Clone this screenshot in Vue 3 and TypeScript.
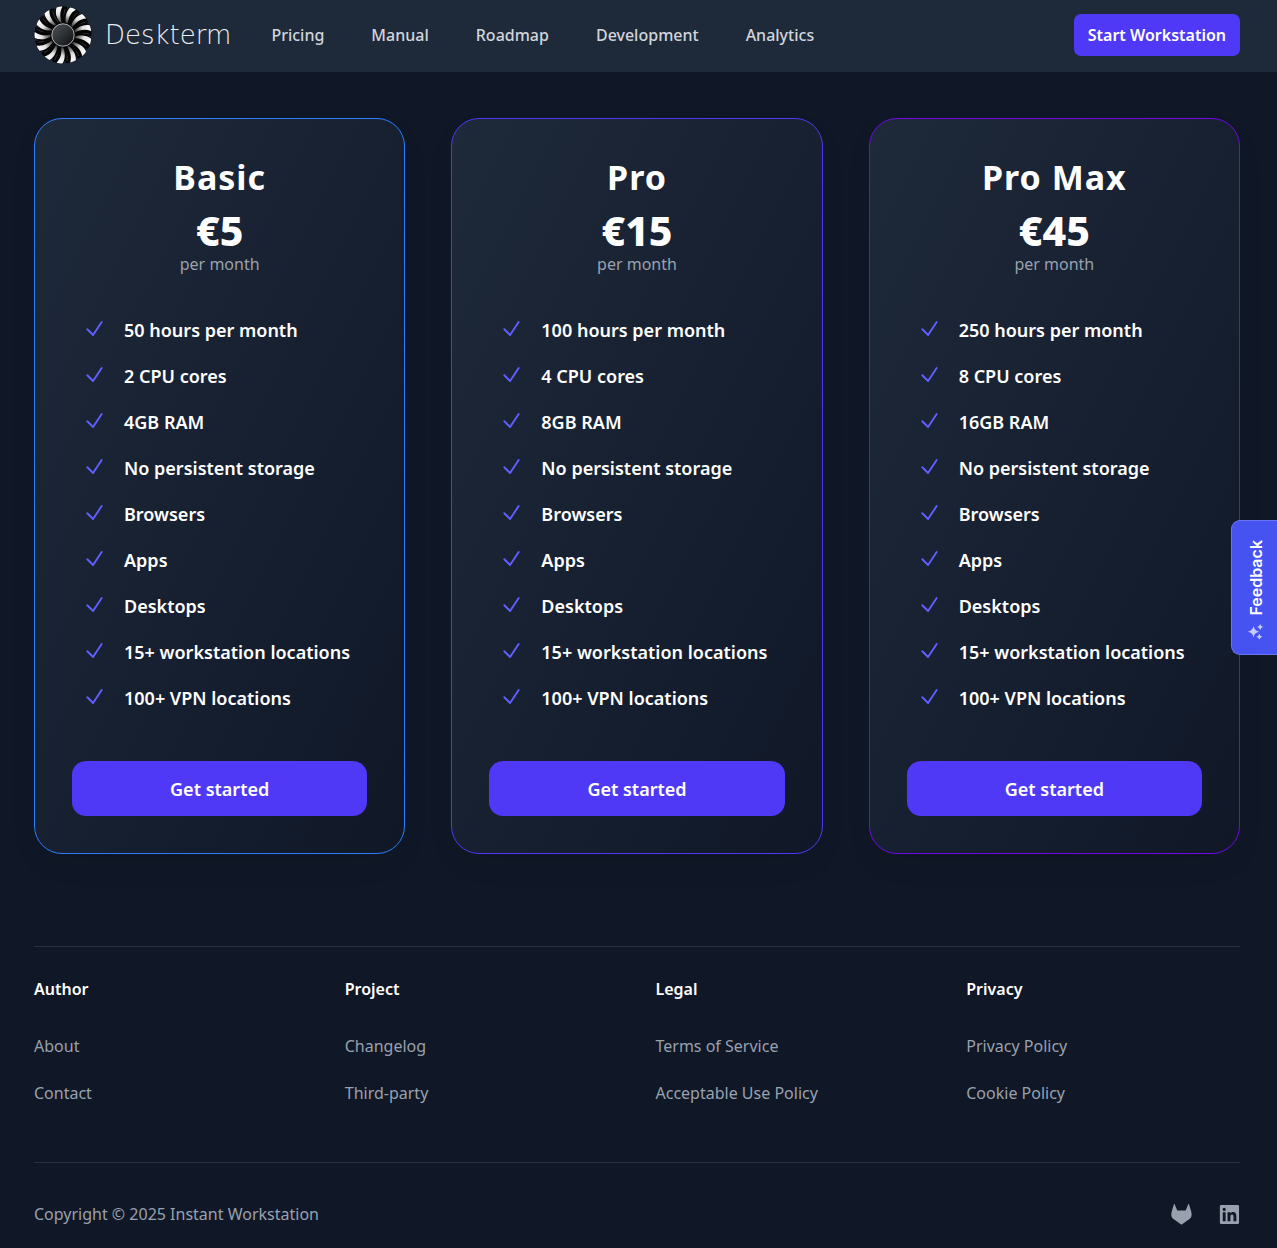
<script setup lang="ts">
interface Plan {
  id: string
  name: string
  price: string
  features: string[]
}

interface FooterColumn {
  title: string
  links: string[]
}

const navLinks: string[] = ['Pricing', 'Manual', 'Roadmap', 'Development', 'Analytics']

const sharedFeatures: string[] = [
  'No persistent storage',
  'Browsers',
  'Apps',
  'Desktops',
  '15+ workstation locations',
  '100+ VPN locations',
]

const plans: Plan[] = [
  { id: 'basic', name: 'Basic', price: '€5', features: ['50 hours per month', '2 CPU cores', '4GB RAM', ...sharedFeatures] },
  { id: 'pro', name: 'Pro', price: '€15', features: ['100 hours per month', '4 CPU cores', '8GB RAM', ...sharedFeatures] },
  { id: 'max', name: 'Pro Max', price: '€45', features: ['250 hours per month', '8 CPU cores', '16GB RAM', ...sharedFeatures] },
]

const footerColumns: FooterColumn[] = [
  { title: 'Author', links: ['About', 'Contact'] },
  { title: 'Project', links: ['Changelog', 'Third-party'] },
  { title: 'Legal', links: ['Terms of Service', 'Acceptable Use Policy'] },
  { title: 'Privacy', links: ['Privacy Policy', 'Cookie Policy'] },
]

const bladeCount = 13
const bladeAngles: number[] = Array.from({ length: bladeCount }, (_, i) => (i * 360) / bladeCount - 4)
</script>

<template>
  <div class="page">
    <header class="header">
      <a class="brand" href="#">
        <svg class="fan" viewBox="0 0 58 58" aria-hidden="true">
          <defs>
            <linearGradient id="blade-shine" x1="0" y1="0" x2="0" y2="1">
              <stop offset="0" stop-color="#ffffff" />
              <stop offset="0.45" stop-color="#e0e0e0" />
              <stop offset="1" stop-color="#222222" />
            </linearGradient>
            <linearGradient id="hub-fill" x1="0" y1="0" x2="1" y2="1">
              <stop offset="0" stop-color="#50555a" />
              <stop offset="1" stop-color="#0c0d0f" />
            </linearGradient>
          </defs>
          <g v-for="angle in bladeAngles" :key="angle" :transform="`rotate(${angle} 29 29)`">
            <path d="M25 20 C21 13 21 6 24 1 Q31 -0.5 35.500 1.500 C33 7 32 13 34 20 Z" fill="#050505" />
            <path d="M27.500 18 C23.500 12 22.500 6 24.500 1 Q27.500 0.300 30.500 0.600 C27 6 27 11 29 18 Z" fill="url(#blade-shine)" />
            <path d="M33 3 C31 8 31 12 32 16" fill="none" stroke="#4a4a4a" stroke-width="0.600" />
          </g>
          <circle cx="29" cy="29" r="12.500" fill="#0a0a0a" />
          <circle cx="29" cy="29" r="11.200" fill="url(#hub-fill)" stroke="#b9bcc0" stroke-width="0.900" />
        </svg>
        <span class="brand-name">Deskterm</span>
      </a>
      <nav class="nav" aria-label="Main">
        <a v-for="link in navLinks" :key="link" href="#">{{ link }}</a>
      </nav>
      <button class="start" type="button">Start Workstation</button>
    </header>

    <main class="plans">
      <section v-for="plan in plans" :key="plan.id" class="card" :class="`card-${plan.id}`">
        <h2 class="plan-name">{{ plan.name }}</h2>
        <p class="price">{{ plan.price }}</p>
        <p class="period">per month</p>
        <ul class="features">
          <li v-for="feature in plan.features" :key="feature">
            <svg class="check" viewBox="0 0 24 24" aria-hidden="true">
              <path d="m4.500 12.750 6 6 9-13.500" />
            </svg>
            <span>{{ feature }}</span>
          </li>
        </ul>
        <button class="get-started" type="button">Get started</button>
      </section>
    </main>

    <footer class="footer">
      <div class="columns">
        <div v-for="column in footerColumns" :key="column.title" class="column">
          <h3>{{ column.title }}</h3>
          <a v-for="link in column.links" :key="link" href="#">{{ link }}</a>
        </div>
      </div>
      <div class="bottom">
        <p>Copyright © 2025 Instant Workstation</p>
        <div class="social">
          <a href="#" aria-label="GitLab">
            <svg viewBox="-1 0 24 24" aria-hidden="true">
              <path d="M4.900 1.200 7.600 7.800H16.400L19.100 1.200q.4-.7.8 0L22.300 9.500C23.100 12.800 22.300 15.200 20.300 16.700L12 22.600 3.700 16.700C1.700 15.200.9 12.800 1.700 9.500L4.100 1.200q.4-.7.8 0z" />
            </svg>
          </a>
          <a href="#" aria-label="LinkedIn">
            <svg viewBox="-1 0 24 24" aria-hidden="true">
              <path fill-rule="evenodd" d="M3.500 2h17A1.500 1.500 0 0 1 22 3.500v17a1.500 1.500 0 0 1-1.500 1.500h-17A1.500 1.500 0 0 1 2 20.500v-17A1.500 1.500 0 0 1 3.500 2zM5 9.600V19h3V9.600zM6.500 5a1.700 1.700 0 1 0 0 3.400 1.700 1.700 0 0 0 0-3.400zM10 9.600V19h3v-4.700c0-1.300.4-2.300 1.700-2.300s1.500 1.100 1.500 2.400V19h3v-5.200c0-2.600-.7-4.400-3.500-4.400-1.400 0-2.300.7-2.700 1.500V9.600z" />
            </svg>
          </a>
        </div>
      </div>
    </footer>

    <button class="feedback" type="button">
      <span>Feedback</span>
      <svg viewBox="-3 -2 18 18" aria-hidden="true">
        <path d="M5.500 2Q6.300 6.900 11.200 7.700 6.300 8.500 5.500 13.400 4.700 8.500 -.2 7.700 4.700 6.900 5.500 2z" />
        <path d="M12.200 0Q12.800 2.400 15.200 3 12.800 3.600 12.200 6 11.600 3.600 9.200 3 11.600 2.400 12.200 0z" />
        <path d="M11.400 9.800Q12 12.100 14.300 12.700 12 13.300 11.400 15.600 10.800 13.300 8.500 12.700 10.800 12.100 11.400 9.800z" />
      </svg>
    </button>
  </div>
</template>

<style>
body {
  background: #101828;
}
</style>

<style scoped>
.page {
  min-height: 100vh;
  background: #101726;
  color: #ffffff;
  font-family: "Noto Sans", sans-serif;
  font-size: 16px;
  line-height: 24px;
}

h2,
h3,
p,
ul {
  margin: 0;
  padding: 0;
}

a {
  color: inherit;
  text-decoration: none;
}

button {
  border: 0;
  color: #ffffff;
  font-family: inherit;
  cursor: pointer;
}

.header {
  display: flex;
  align-items: center;
  box-sizing: border-box;
  min-height: 72px;
  padding: 6px 37px 8px 34px;
  background: #1e2939;
}

.brand {
  display: flex;
  align-items: center;
  gap: 13px;
  color: #eceef2;
}

.fan {
  width: 58px;
  height: 58px;
}

.brand-name {
  font-family: "DejaVu Sans", sans-serif;
  font-size: 26px;
  font-weight: 200;
  line-height: 32px;
}

.nav {
  display: flex;
  gap: 47px;
  margin-left: 40px;
  color: #d1d5dc;
  font-weight: 500;
}

.start {
  margin-left: auto;
  padding: 9px 14px;
  border-radius: 7px;
  background: #4f39f6;
  font-size: 16px;
  font-weight: 600;
  line-height: 24px;
}

.plans {
  display: grid;
  grid-template-columns: repeat(3, 1fr);
  gap: 46px;
  padding: 46px 37px 92px 34px;
}

.card {
  display: flex;
  flex-direction: column;
  padding: 37px;
  border: 1px solid;
  border-radius: 28px;
  background: linear-gradient(to bottom right, #1e2939, #101828);
  box-shadow: 0 12px 32px -8px rgba(0, 0, 0, 0.1);
  text-align: center;
}

.card-basic {
  border-color: #2b7fff;
}

.card-pro {
  border-color: #4f39f6;
}

.card-max {
  border-color: #7008e7;
}

.plan-name {
  font-size: 34px;
  font-weight: 700;
  line-height: 42px;
  letter-spacing: 1px;
}

.price {
  margin-top: 9px;
  font-size: 41px;
  font-weight: 800;
  line-height: 46px;
}

.period {
  color: #99a1af;
  line-height: 22px;
}

.features {
  display: flex;
  flex-direction: column;
  gap: 18px;
  margin: 41px 0 49px;
  padding-left: 11px;
  list-style: none;
  text-align: left;
  font-size: 18px;
  font-weight: 600;
  line-height: 28px;
}

.features li {
  display: flex;
  align-items: flex-start;
  gap: 18px;
}

.check {
  flex: none;
  width: 23px;
  height: 23px;
  margin-top: 1px;
  fill: none;
  stroke: #615fff;
  stroke-width: 2;
  stroke-linecap: round;
  stroke-linejoin: round;
}

.get-started {
  padding: 14px 14px 13px;
  border-radius: 14px;
  background: #4f39f6;
  font-size: 18px;
  font-weight: 600;
  line-height: 28px;
}

.footer {
  padding: 0 37px 21px 34px;
  color: #99a1af;
}

.columns {
  display: grid;
  grid-template-columns: repeat(4, 1fr);
  gap: 37px;
  padding: 30px 0 57px;
  border-top: 1px solid #282f3d;
}

.column {
  display: flex;
  flex-direction: column;
  align-items: flex-start;
  gap: 23px;
}

.column h3 {
  margin-bottom: 10px;
  color: #ffffff;
  font-size: 16px;
  font-weight: 600;
  line-height: 24px;
}

.bottom {
  display: flex;
  align-items: center;
  justify-content: space-between;
  padding-top: 39px;
  border-top: 1px solid #282f3d;
}

.social {
  display: flex;
  gap: 25px;
}

.social a {
  display: flex;
}

.social svg {
  width: 23px;
  height: 23px;
  fill: #99a1af;
}

.feedback {
  position: fixed;
  top: 520px;
  right: 0;
  display: flex;
  flex-direction: column;
  align-items: center;
  gap: 6px;
  padding: 19px 10px 14px 13px;
  border: 1px solid #6b74f5;
  border-right: 0;
  border-radius: 9px 0 0 9px;
  background: #4653f0;
  font-family: Inter, sans-serif;
  font-size: 16px;
  font-weight: 600;
  line-height: 22px;
}

.feedback span {
  writing-mode: vertical-rl;
  transform: rotate(180deg);
}

.feedback svg {
  align-self: flex-start;
  width: 18px;
  height: 18px;
  overflow: visible;
  fill: #c7cbfb;
}
</style>
